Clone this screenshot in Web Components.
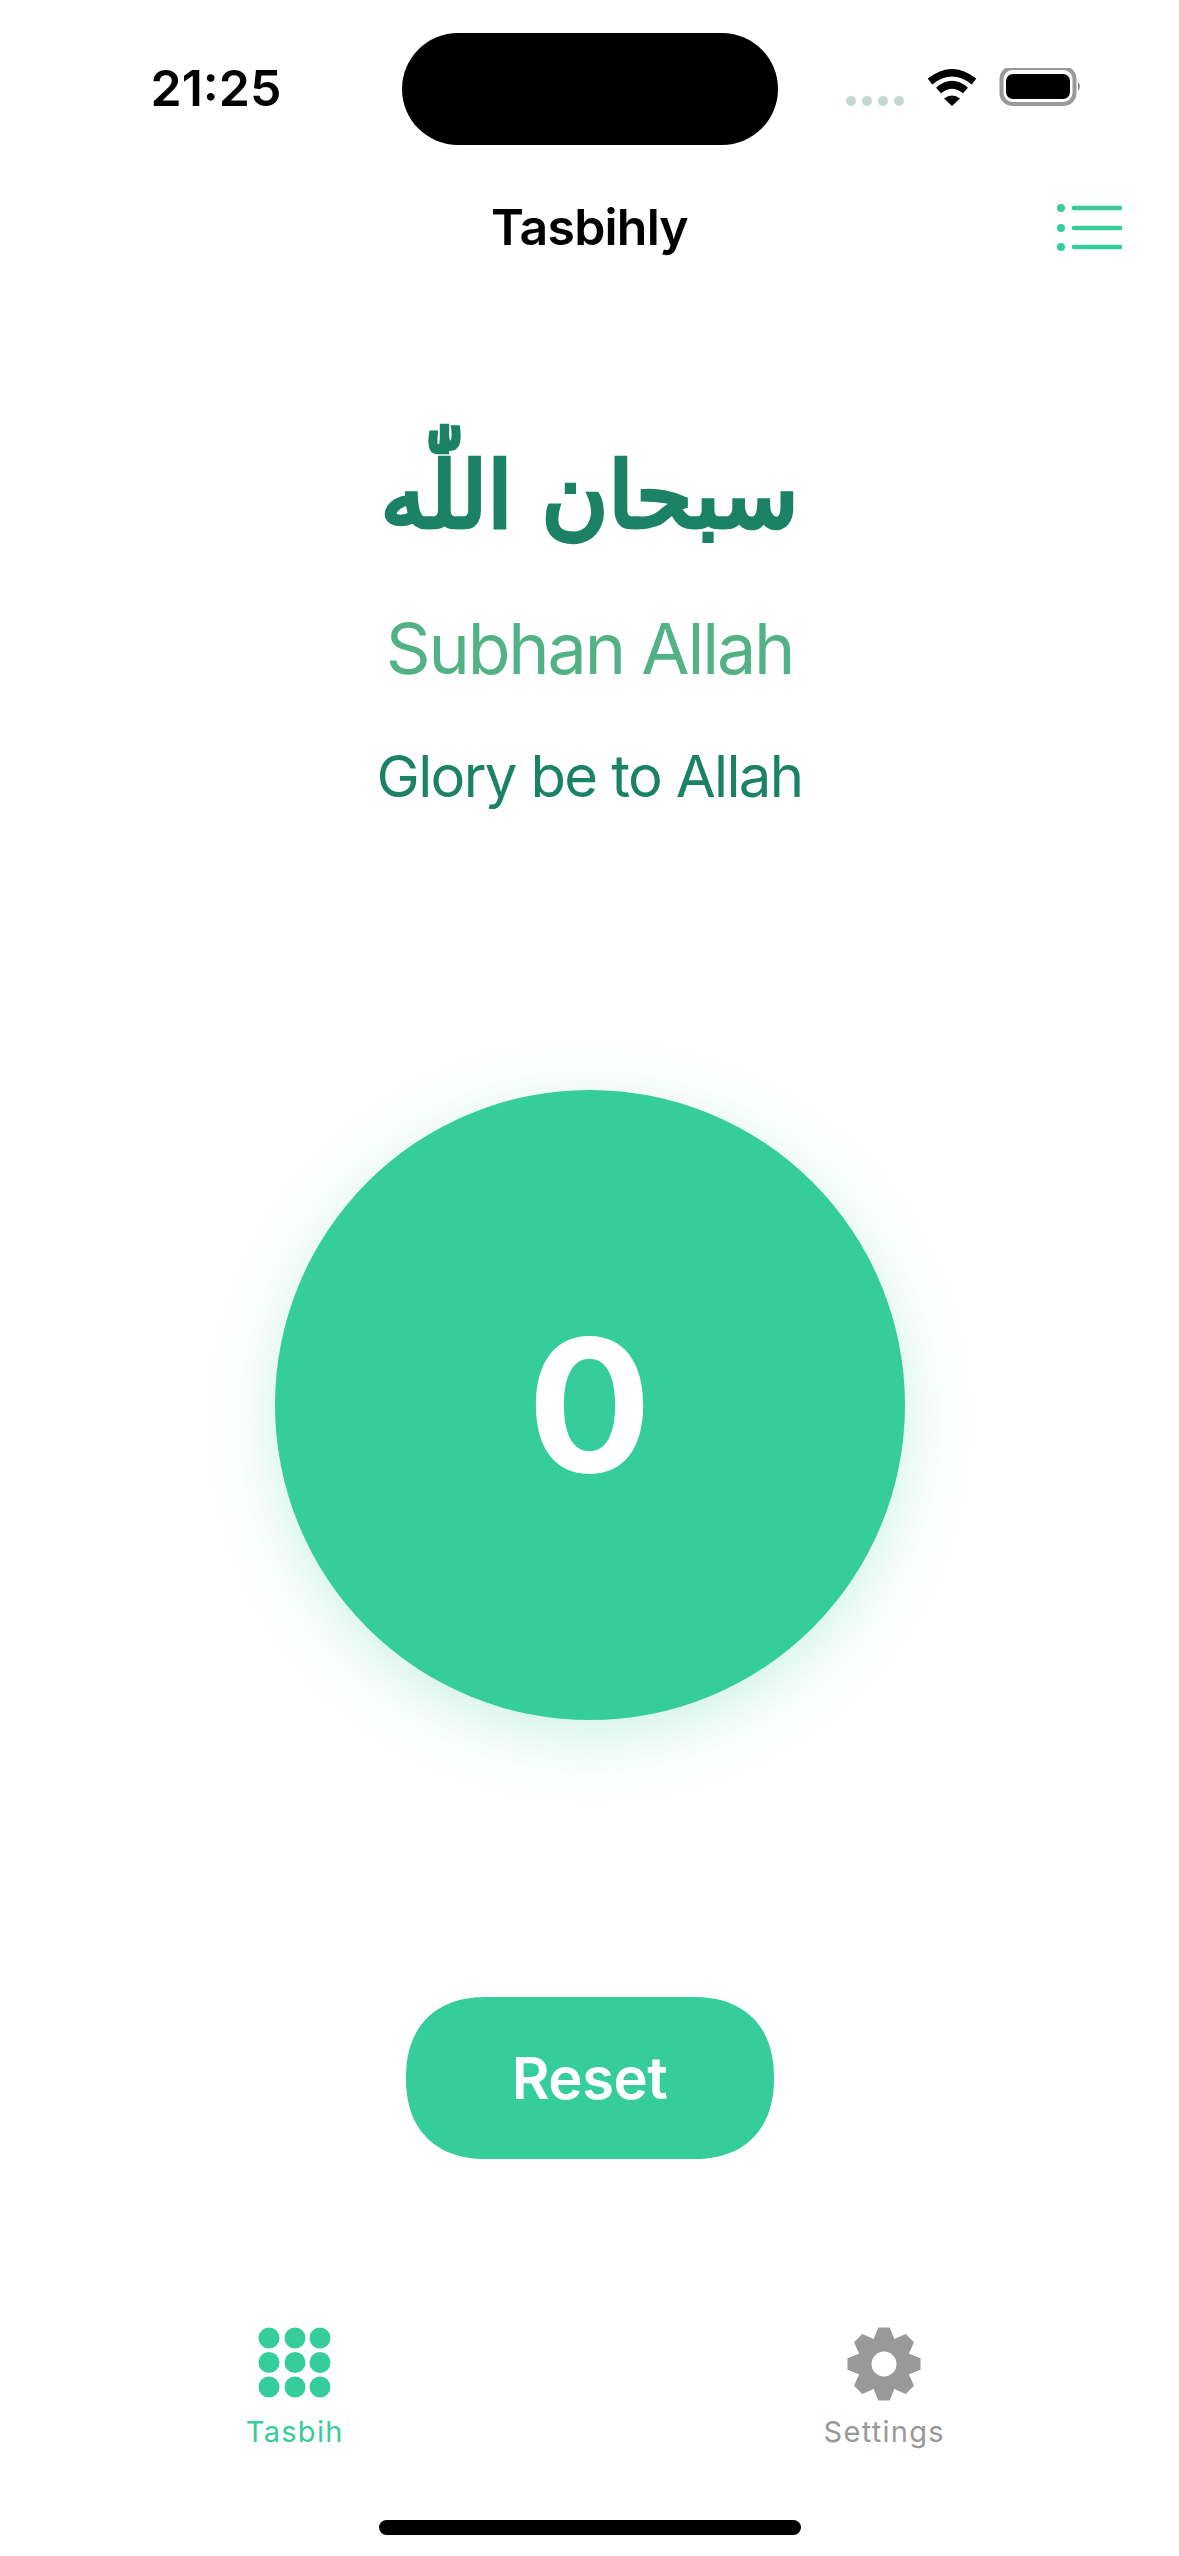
<!DOCTYPE html>
<html lang="en"><head><meta charset="utf-8"><title>Tasbihly</title>
<style>html,body{margin:0;padding:0;background:#fff}body{width:1179px;height:2556px;overflow:hidden;font-family:Inter,"Liberation Sans",sans-serif}</style>
</head><body>
<app-screen>
  <status-bar slot="status"></status-bar>
  <nav-bar slot="nav">Tasbihly</nav-bar>
  <dhikr-text slot="dhikr"></dhikr-text>
  <count-button slot="counter">0</count-button>
  <reset-button slot="reset">Reset</reset-button>
  <tab-bar slot="tabs">
    <tab-item active label="Tasbih" icon="dots"></tab-item>
    <tab-item label="Settings" icon="gear"></tab-item>
  </tab-bar>
</app-screen>
<script>
function def(name, html, extra){
  customElements.define(name, class extends HTMLElement{
    constructor(){super();this.attachShadow({mode:'open'}).innerHTML=html;}
    connectedCallback(){ if(extra) extra(this); }
  });
}
def('app-screen',`<style>
:host{display:flex;flex-direction:column;width:1179px;height:2556px;background:#fff;color:#000}
.dhikr{padding-top:179.5px}
.counter{display:flex;justify-content:center;padding-top:279px}
.reset{display:flex;justify-content:center;padding-top:277px}
.tabs{padding-top:168px}
.home{display:flex;justify-content:center;padding-top:70px}
.home i{display:block;width:422px;height:15px;border-radius:8px;background:#000}
</style>
<slot name="status"></slot><slot name="nav"></slot>
<div class="dhikr"><slot name="dhikr"></slot></div>
<div class="counter"><slot name="counter"></slot></div>
<div class="reset"><slot name="reset"></slot></div>
<div class="tabs"><slot name="tabs"></slot></div>
<div class="home"><i></i></div>`);
def('status-bar',`<style>
:host{display:block;height:190px;box-sizing:border-box;padding-top:33px}
.row{display:flex;align-items:flex-start;height:112px}
.time{width:402px;box-sizing:border-box;padding:25px 0 0 30px;text-align:center;font:600 50px/60px Inter,sans-serif;color:#000}
.island{width:376px;height:112px;border-radius:56px;background:#000;flex:none}
.right{flex:1;display:flex;align-items:flex-start;padding:35px 0 0 68px}
svg{display:block}
</style>
<div class="row"><div class="time">21:25</div><div class="island"></div>
<div class="right"><svg width="240" height="44" viewBox="0 0 240 44">
<g fill="#c3d9d0"><circle cx="5" cy="33" r="5"/><circle cx="21" cy="33" r="5"/><circle cx="37" cy="33" r="5"/><circle cx="53" cy="33" r="5"/></g>
<g fill="none" stroke="#000" stroke-width="7.5"><path d="M84 12.500Q106 -5 128 12.500" transform="translate(0 1)"/><path d="M92.500 22.500Q106 11 119.500 22.500"/></g>
<path d="M98 30.500Q106 24.500 114 30.500L106 38Z" fill="#000"/>
<rect x="155.500" y="0" width="73" height="36" rx="11" fill="none" stroke="#999" stroke-width="4"/>
<rect x="160" y="6" width="64" height="25" rx="7" fill="#000"/>
<path d="M232 14Q236 18 232 23Z" fill="#888"/>
</svg></div></div>`);
def('nav-bar',`<style>
:host{display:block}
.bar{display:grid;grid-template-columns:1fr auto 1fr;align-items:center;height:70px;margin-top:1.500px}
.t{font:600 50px/60px Inter,sans-serif;color:#000;letter-spacing:-.8px}
.r{display:flex;justify-content:flex-end;padding:3px 57px 0 0}
svg{display:block}
</style>
<div class="bar"><span></span><div class="t"><slot></slot></div>
<div class="r"><svg width="66" height="50" viewBox="0 0 66 50"><g fill="#35cd99"><circle cx="5" cy="5" r="4"/><circle cx="5" cy="25" r="4"/><circle cx="5" cy="44" r="4"/></g><g stroke="#35cd99" stroke-width="4.500" stroke-linecap="round"><path d="M18 5H64M18 25H64M18 44H64"/></g></svg></div></div>`);
def('dhikr-text',`<style>
:host{display:flex;flex-direction:column;align-items:center;text-align:center}
.ar{font:400 91px/110px "DejaVu Sans",sans-serif;color:#1b8265;direction:rtl;-webkit-text-stroke:4.5px #1b8265;stroke-linejoin:round;paint-order:stroke fill}
.en{font:400 70px/84px Inter,sans-serif;color:#52b286;margin-top:56px;letter-spacing:-2.2px}
.tr{font:400 58px/70px Inter,sans-serif;color:#1b8265;margin-top:50px;letter-spacing:-1.65px}
</style>
<div class="ar" lang="ar">سبحان اللّٰه</div><div class="en">Subhan Allah</div><div class="tr">Glory be to Allah</div>`);
def('count-button',`<style>
:host{display:flex;align-items:center;justify-content:center;width:630px;height:630px;border-radius:50%;background:#35cd99;box-shadow:0 16px 64px rgba(53,205,153,.25);color:#fff;font:700 184px/1 Inter,sans-serif}
</style><slot></slot>`);
def('reset-button',`<style>
:host{display:flex;align-items:center;justify-content:center;width:368px;height:162px;border-radius:81px;corner-shape:superellipse(1.2);background:#35cd99;color:#fff;font:600 58px/1 Inter,sans-serif;letter-spacing:-.5px}
</style><slot></slot>`);
def('tab-bar',`<style>:host{display:grid;grid-template-columns:1fr 1fr}</style><slot></slot>`);
customElements.define('tab-item',class extends HTMLElement{
  constructor(){super();this.attachShadow({mode:'open'});}
  connectedCallback(){
    const active=this.hasAttribute('active');
    const c=active?'#35cd99':'#999';
    let icon='';
    if(this.getAttribute('icon')==='dots'){
      let d='';for(const y of [11,35.500,60])for(const x of [11,37,62])d+=`<circle cx="${x}" cy="${y}" r="10.500"/>`;
      icon=`<svg width="74" height="74" viewBox="0 0 74 74" fill="${c}">${d}</svg>`;
    }else{
      let pts=[];const n=8,R=37,r=27;
      for(let i=0;i<n;i++){const a=i*2*Math.PI/n-Math.PI/2,s=2*Math.PI/n;
        for(const [k,q] of [[-.5,r],[-.2,R],[.2,R],[.5,r]]){const t=a+k*s;pts.push((37+q*Math.cos(t)).toFixed(1)+' '+(37+q*Math.sin(t)).toFixed(1));}}
      icon=`<svg width="74" height="74" viewBox="0 0 74 74"><path fill-rule="evenodd" fill="${c}" d="M${pts.join('L')}Z M24.500 37a12.500 12.500 0 1 0 25 0a12.500 12.500 0 1 0 -25 0Z"/></svg>`;
    }
    this.shadowRoot.innerHTML=`<style>
:host{display:flex;flex-direction:column;align-items:center;gap:13px;color:${c};font:400 29px/36px Inter,sans-serif;letter-spacing:1.3px}
svg{display:block}</style>${icon}<span>${this.getAttribute('label')}</span>`;
  }
});
</script>
</body></html>
